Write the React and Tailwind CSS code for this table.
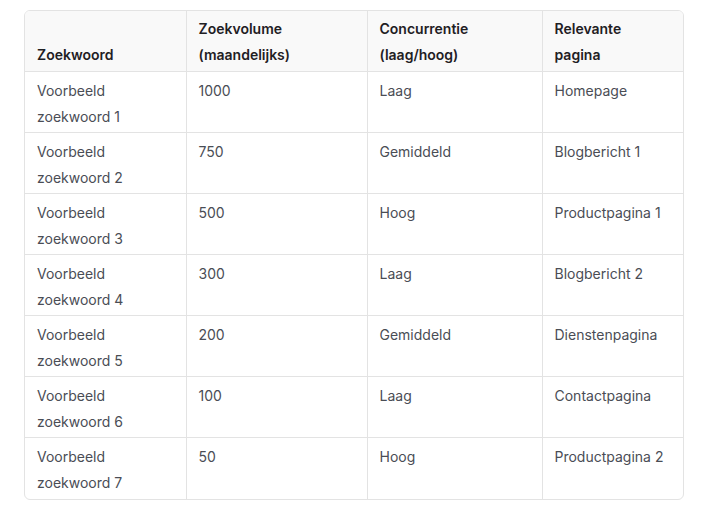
import React from 'react';

const rows = [
  ['Voorbeeld zoekwoord 1', '1000', 'Laag', 'Homepage'],
  ['Voorbeeld zoekwoord 2', '750', 'Gemiddeld', 'Blogbericht 1'],
  ['Voorbeeld zoekwoord 3', '500', 'Hoog', 'Productpagina 1'],
  ['Voorbeeld zoekwoord 4', '300', 'Laag', 'Blogbericht 2'],
  ['Voorbeeld zoekwoord 5', '200', 'Gemiddeld', 'Dienstenpagina'],
  ['Voorbeeld zoekwoord 6', '100', 'Laag', 'Contactpagina'],
  ['Voorbeeld zoekwoord 7', '50', 'Hoog', 'Productpagina 2'],
];

const headers = [
  ['Zoekwoord'],
  ['Zoekvolume', '(maandelijks)'],
  ['Concurrentie', '(laag/hoog)'],
  ['Relevante', 'pagina'],
];

const widths = ['w-[161px]', 'w-[181px]', 'w-[175px]', 'w-[141px]'];

const App = () => {
  return (
    <div className="bg-white w-[720px] h-[519px] pt-[10px] pl-[24px] font-['Inter',sans-serif]">
      <div className="w-[660px] border border-[#e3e3e3] rounded-md overflow-hidden">
        <table className="w-full border-collapse table-fixed text-[14px] leading-[26px]">
          <thead>
            <tr className="bg-[#f9f9f9]">
              {headers.map((h, i) => (
                <th
                  key={i}
                  className={`${widths[i]} text-left align-bottom font-semibold text-[#1f2024] pl-[12px] pr-2 pt-[5px] pb-[3px] ${i > 0 ? 'border-l border-[#e3e3e3]' : ''}`}
                >
                  {h.map((line, j) => (
                    <div key={j}>{line}</div>
                  ))}
                </th>
              ))}
            </tr>
          </thead>
          <tbody>
            {rows.map((r, ri) => (
              <tr key={ri} className="border-t border-[#e3e3e3]">
                {r.map((c, ci) => (
                  <td
                    key={ci}
                    className={`align-top text-[#4a4d55] pl-[12px] pr-2 pt-[6px] ${ri === rows.length - 1 ? 'pb-[3px]' : 'pb-[2px]'} ${ci > 0 ? 'border-l border-[#e3e3e3]' : ''}`}
                  >
                    {ci === 0 ? (
                      <>
                        <div>Voorbeeld</div>
                        <div>{c.replace('Voorbeeld ', '')}</div>
                      </>
                    ) : (
                      <div className="h-[52px]">{c}</div>
                    )}
                  </td>
                ))}
              </tr>
            ))}
          </tbody>
        </table>
      </div>
    </div>
  );
};

export default App;
